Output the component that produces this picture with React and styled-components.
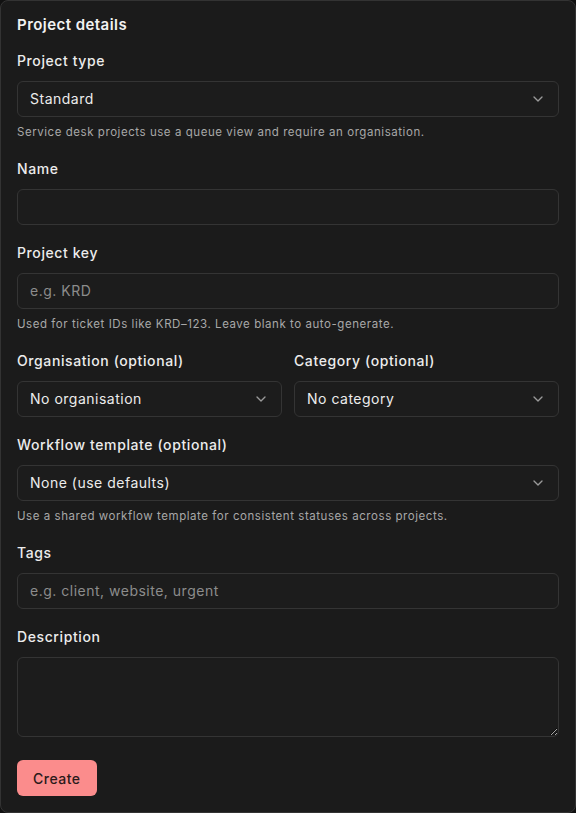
import React from "react";
import styled, { createGlobalStyle } from "styled-components";
import { ChevronDown } from "lucide-react";

const GlobalStyle = createGlobalStyle`
  html, body {
    margin: 0;
    padding: 0;
    background: #111;
  }
  body {
    font-family: Inter, "Noto Sans", sans-serif;
    color: #ececec;
  }
  * { box-sizing: border-box; }
`;

const Card = styled.form`
  width: 576px;
  height: 813px;
  background: #1b1b1b;
  border: 1px solid #333;
  border-radius: 8px;
  padding: 14px 16px 16px;
  display: flex;
  flex-direction: column;
`;

const Title = styled.h2`
  margin: 0 0 16px;
  font-size: 15px;
  line-height: 20px;
  font-weight: 600;
  letter-spacing: 0.45px;
  color: #f2f2f2;
`;

const Fields = styled.div`
  display: flex;
  flex-direction: column;
  gap: 18px;
`;

const Row = styled.div`
  display: grid;
  grid-template-columns: 1fr 1fr;
  gap: 12px;
`;

const Field = styled.div`
  display: flex;
  flex-direction: column;
`;

const Label = styled.label`
  font-size: 14px;
  line-height: 20px;
  font-weight: 500;
  letter-spacing: 0.6px;
  color: #ececec;
  margin-bottom: 10px;
`;

const Control = styled.div`
  position: relative;
  height: 36px;
  background: #1c1c1c;
  border: 1px solid #343434;
  border-radius: 6px;
  display: flex;
  align-items: center;
  padding: 0 12px 1px;
  font-size: 14px;
  letter-spacing: 0.5px;
  color: #ececec;
`;

const Input = styled.input`
  height: 36px;
  background: #1c1c1c;
  border: 1px solid #343434;
  border-radius: 6px;
  padding: 0 12px 1px;
  font: inherit;
  font-size: 14px;
  letter-spacing: 0.5px;
  color: #ececec;
  outline: none;
  &::placeholder { color: #8c8c8c; }
`;

const TextArea = styled.textarea`
  height: 80px;
  background: #1c1c1c;
  border: 1px solid #343434;
  border-radius: 6px;
  padding: 8px 12px;
  font: inherit;
  font-size: 14px;
  color: #ececec;
  outline: none;
  resize: vertical;
`;

const Chevron = styled(ChevronDown)`
  position: absolute;
  right: 12px;
  top: 50%;
  transform: translateY(-50%);
  color: #9a9a9a;
`;

const Help = styled.p`
  margin: 7px 0 0;
  font-size: 11.5px;
  line-height: 17px;
  letter-spacing: 0.55px;
  color: #a8a8a8;
`;

const Button = styled.button`
  margin-top: 23px;
  align-self: flex-start;
  height: 36px;
  padding: 0 16px;
  border: none;
  border-radius: 6px;
  background: #fb8c8c;
  color: #2a1a1a;
  font: inherit;
  font-size: 14px;
  font-weight: 500;
  letter-spacing: 0.5px;
`;

const Select = ({ children }) => (
  <Control>
    {children}
    <Chevron size={16} strokeWidth={2} />
  </Control>
);

export default function App() {
  return (
    <>
      <GlobalStyle />
      <Card onSubmit={(e) => e.preventDefault()}>
        <Title>Project details</Title>
        <Fields>
          <Field>
            <Label>Project type</Label>
            <Select>Standard</Select>
            <Help>Service desk projects use a queue view and require an organisation.</Help>
          </Field>
          <Field>
            <Label>Name</Label>
            <Input />
          </Field>
          <Field>
            <Label>Project key</Label>
            <Input placeholder="e.g. KRD" />
            <Help>Used for ticket IDs like KRD–123. Leave blank to auto-generate.</Help>
          </Field>
          <Row>
            <Field>
              <Label>Organisation (optional)</Label>
              <Select>No organisation</Select>
            </Field>
            <Field>
              <Label>Category (optional)</Label>
              <Select>No category</Select>
            </Field>
          </Row>
          <Field>
            <Label>Workflow template (optional)</Label>
            <Select>None (use defaults)</Select>
            <Help>Use a shared workflow template for consistent statuses across projects.</Help>
          </Field>
          <Field>
            <Label>Tags</Label>
            <Input placeholder="e.g. client, website, urgent" />
          </Field>
          <Field>
            <Label>Description</Label>
            <TextArea />
          </Field>
        </Fields>
        <Button type="submit">Create</Button>
      </Card>
    </>
  );
}
